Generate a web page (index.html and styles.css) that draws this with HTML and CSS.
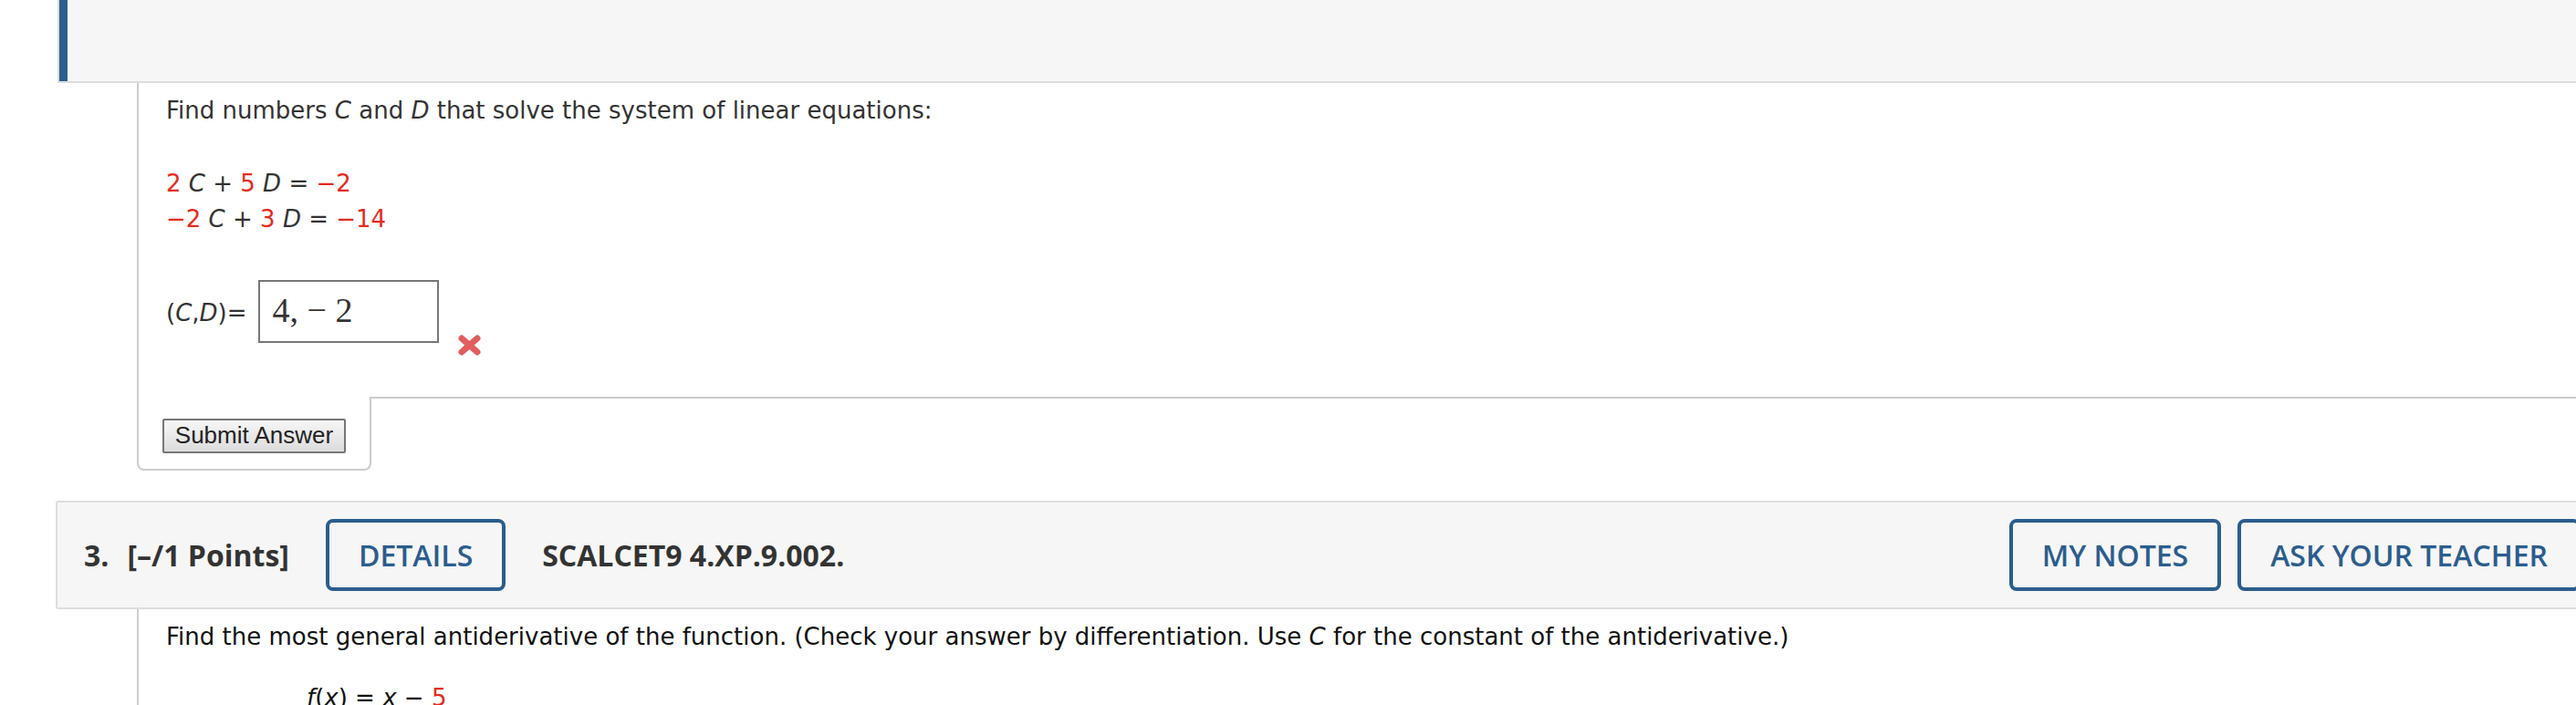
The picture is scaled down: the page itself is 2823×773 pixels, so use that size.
FILE: index.html
```
<!DOCTYPE html>
<html>
<head>
  <title>Assignment</title>
  <link rel="stylesheet" href="styles.css">
</head>
<body>
  <div class="assignment">

    <div class="question-header previous"></div>

    <div class="question-body">
      <div class="question-text">
        <p class="prompt">Find numbers <i>C</i> and <i>D</i> that solve the system of linear equations:</p>
        <div class="equations">
          <div><span class="num">2</span> <i>C</i> + <span class="num">5</span> <i>D</i> = <span class="num">&minus;2</span></div>
          <div><span class="num">&minus;2</span> <i>C</i> + <span class="num">3</span> <i>D</i> = <span class="num">&minus;14</span></div>
        </div>
        <div class="answer-row">
          <span class="answer-label">(<i>C</i>,<i>D</i>)=</span>
          <span class="answer-box">4, &minus; 2</span>
          <svg class="wrong-mark" width="27" height="25" viewBox="0 0 27 25">
            <line x1="5" y1="5" x2="22" y2="20" stroke="#e35d5d" stroke-width="7" stroke-linecap="round"/>
            <line x1="22" y1="5" x2="5" y2="20" stroke="#e35d5d" stroke-width="7" stroke-linecap="round"/>
          </svg>
        </div>
      </div>
      <div class="submit-row">
        <div class="submit-tab">
          <button class="submit-button">Submit Answer</button>
        </div>
        <div class="submit-rest"></div>
      </div>
    </div>

    <div class="question-header">
      <span class="q-number">3.</span>
      <span class="q-points">[&ndash;/1 Points]</span>
      <button class="outline-button details">DETAILS</button>
      <span class="q-code">SCALCET9 4.XP.9.002.</span>
      <button class="outline-button notes">MY NOTES</button>
      <button class="outline-button">ASK YOUR TEACHER</button>
    </div>

    <div class="question-body">
      <div class="question-text current">
        <p class="prompt">Find the most general antiderivative of the function. (Check your answer by differentiation. Use <i>C</i> for the constant of the antiderivative.)</p>
        <div class="function"><i>f</i>(<i>x</i>) = <i>x</i> &minus; <span class="num">5</span></div>
      </div>
    </div>

  </div>
</body>
</html>
```

FILE: styles.css
```
body {
  margin: 0;
  padding: 0;
  background-color: #fff;
  overflow: hidden;
}

.assignment {
  margin-left: 61px;
}

/* grey bar above each question */
.question-header {
  display: flex;
  align-items: center;
  height: 115px;
  padding: 0 0 0 29px;
  margin-right: -5px;
  background-color: #f6f6f6;
  border: 2px solid #ddd;
  border-right: none;
  border-radius: 3px 0 0 3px;
  margin-top: 33px;
  font-family: "Open Sans", sans-serif;
  font-size: 32px;
  color: #333;
}

.question-header.previous {
  height: 89px;
  padding: 0;
  margin-top: 0;
  margin-left: 2px;
  border-top: none;
  border-radius: 0;
  box-shadow: inset 9px 0 0 #2b5d8e;
}

.q-number,
.q-points,
.q-code {
  font-weight: 700;
}

.q-number {
  margin-right: 20px;
}

.q-code {
  margin-left: 40px;
}

.outline-button {
  height: 79px;
  padding: 0 32px;
  background-color: transparent;
  border: 4px solid #2b5d8e;
  border-radius: 8px;
  color: #2b5d8e;
  font-family: "Open Sans", sans-serif;
  font-size: 32px;
  font-weight: 600;
  cursor: pointer;
}

.outline-button.details {
  margin-left: 40px;
}

.outline-button.notes {
  margin-left: auto;
  margin-right: 18px;
}

/* question content */
.question-body {
  margin-left: 89px;
}

.question-text {
  border-left: 2px solid #ccc;
  padding: 11px 0 44px 30px;
  font-family: "DejaVu Sans", Verdana, sans-serif;
  font-size: 26px;
  line-height: 39.5px;
  color: #333;
}

.question-text.current {
  padding-top: 11px;
  padding-bottom: 60px;
  color: #111;
}

.prompt {
  margin: 0 0 40px 0;
}

.current .prompt {
  margin-bottom: 28px;
}

.num {
  color: #e42c20;
}

.function {
  padding-left: 154px;
}

.answer-row {
  display: flex;
  align-items: flex-start;
  height: 84px;
  margin-top: 46px;
}

.answer-label {
  margin-top: 17px;
}

.answer-box {
  box-sizing: border-box;
  width: 198px;
  height: 69px;
  margin-left: 12px;
  padding-left: 14px;
  border: 2px solid #777;
  font-family: "Liberation Serif", serif;
  font-size: 38px;
  line-height: 63px;
  color: #333;
  white-space: pre;
}

.wrong-mark {
  margin-left: 20px;
  margin-top: 59px;
}

/* submit tab under the question */
.submit-row {
  display: flex;
}

.submit-tab {
  width: 227px;
  padding: 24px 0 17px 26px;
  border: 2px solid #ccc;
  border-top: none;
  border-radius: 0 0 8px 8px;
}

.submit-rest {
  flex-grow: 1;
  border-top: 2px solid #ccc;
}

.submit-button {
  display: block;
  width: 201px;
  height: 38px;
  padding: 0;
  background: linear-gradient(#f6f6f6, #dcdcdc);
  border: 2px solid #777;
  border-radius: 2px;
  font-family: "Liberation Sans", Arial, sans-serif;
  font-size: 26px;
  color: #222;
  cursor: pointer;
}
```
